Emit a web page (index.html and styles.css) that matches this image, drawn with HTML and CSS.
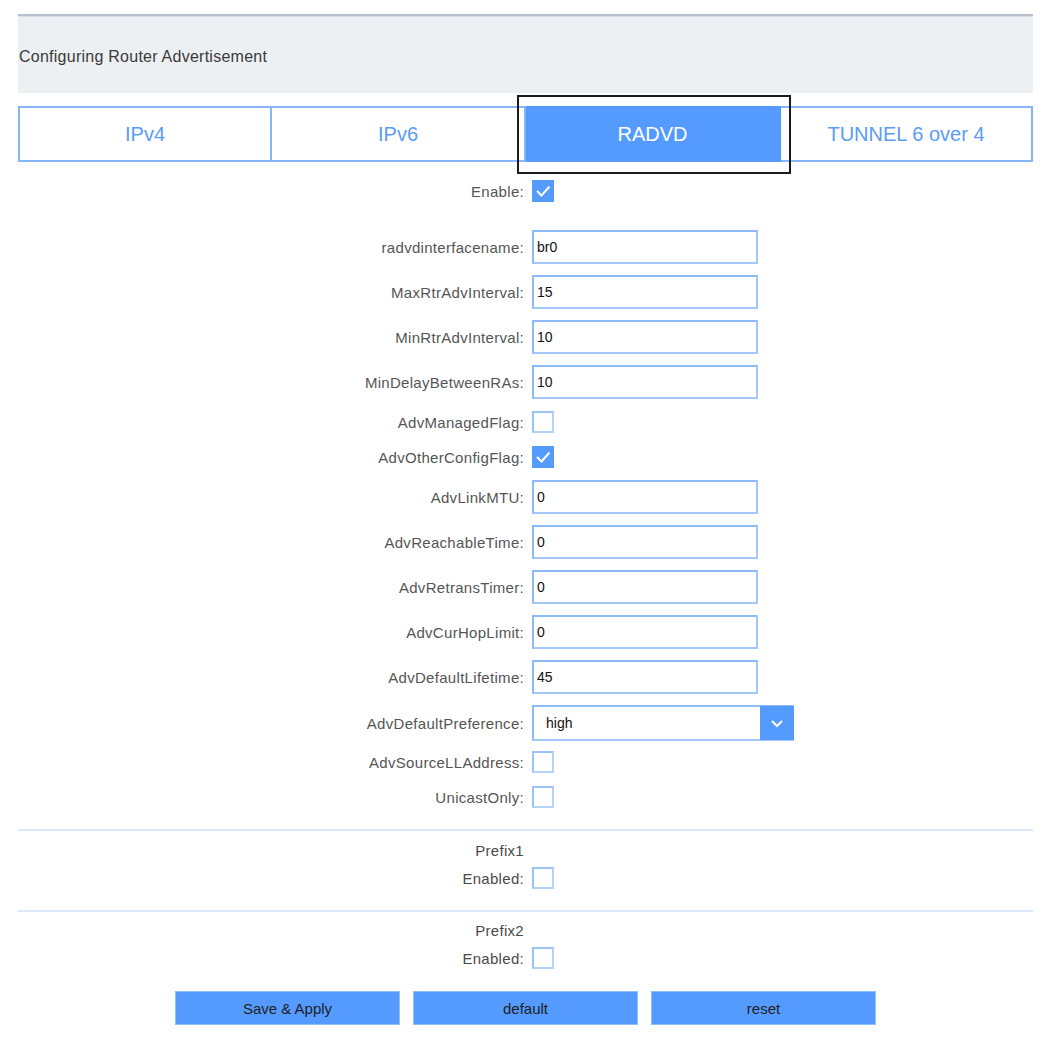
FILE: index.html
```html
<!DOCTYPE html>
<html lang="en">
<head>
<meta charset="utf-8">
<title>Configuring Router Advertisement</title>
<link rel="stylesheet" href="styles.css">
</head>
<body>
<div class="page">
  <div class="topbar"></div>
  <div class="header">Configuring Router Advertisement</div>

  <div class="tabs">
    <div class="tab">IPv4</div>
    <div class="tab">IPv6</div>
    <div class="tab active">RADVD</div>
    <div class="tab">TUNNEL 6 over 4</div>
  </div>

  <form class="form">
    <div class="row chk first"><label>Enable:</label><span class="cb on"><svg viewBox="0 0 22 22" width="22" height="22"><polyline points="5,11 9.5,15.5 17.5,6.5" fill="none" stroke="#fff" stroke-width="2"/></svg></span></div>
    <div class="row"><label>radvdinterfacename:</label><input class="txt" type="text" value="br0"></div>
    <div class="row"><label>MaxRtrAdvInterval:</label><input class="txt" type="text" value="15"></div>
    <div class="row"><label>MinRtrAdvInterval:</label><input class="txt" type="text" value="10"></div>
    <div class="row"><label>MinDelayBetweenRAs:</label><input class="txt" type="text" value="10"></div>
    <div class="row chk"><label>AdvManagedFlag:</label><span class="cb"></span></div>
    <div class="row chk"><label>AdvOtherConfigFlag:</label><span class="cb on"><svg viewBox="0 0 22 22" width="22" height="22"><polyline points="5,11 9.5,15.5 17.5,6.5" fill="none" stroke="#fff" stroke-width="2"/></svg></span></div>
    <div class="row"><label>AdvLinkMTU:</label><input class="txt" type="text" value="0"></div>
    <div class="row"><label>AdvReachableTime:</label><input class="txt" type="text" value="0"></div>
    <div class="row"><label>AdvRetransTimer:</label><input class="txt" type="text" value="0"></div>
    <div class="row"><label>AdvCurHopLimit:</label><input class="txt" type="text" value="0"></div>
    <div class="row"><label>AdvDefaultLifetime:</label><input class="txt" type="text" value="45"></div>
    <div class="row"><label>AdvDefaultPreference:</label>
      <div class="select"><span class="sel-val">high</span><span class="sel-btn"><svg viewBox="0 0 34 34" width="34" height="34"><polyline points="12,15 17,20 22,15" fill="none" stroke="#fff" stroke-width="2"/></svg></span></div>
    </div>
    <div class="row chk"><label>AdvSourceLLAddress:</label><span class="cb"></span></div>
    <div class="row chk"><label>UnicastOnly:</label><span class="cb"></span></div>
  </form>

  <div class="divider"></div>
  <div class="prefix">
    <div class="row plain"><label>Prefix1</label><span></span></div>
    <div class="row chk"><label>Enabled:</label><span class="cb"></span></div>
  </div>
  <div class="divider"></div>
  <div class="prefix second">
    <div class="row plain"><label>Prefix2</label><span></span></div>
    <div class="row chk"><label>Enabled:</label><span class="cb"></span></div>
  </div>

  <div class="buttons">
    <button type="button" class="btn">Save &amp; Apply</button>
    <button type="button" class="btn">default</button>
    <button type="button" class="btn">reset</button>
  </div>
</div>
</body>
</html>
```
FILE: styles.css
```css
* { box-sizing: border-box; }
html, body { margin: 0; padding: 0; background: #fff; }
body {
  font-family: "Liberation Sans", Arial, sans-serif;
  color: #555;
}
.page {
  margin-left: 18px;
  width: 1015px;
}
.topbar {
  height: 16px;
  border-bottom: 2px solid #b7c0cc;
}
.header {
  height: 77px;
  border-top: 1px solid #dadfe6;
  background: #edf0f3;
  display: flex;
  align-items: center;
  padding: 4px 0 0 1px;
  font-size: 16px;
  letter-spacing: 0.25px;
  color: #3a3a3a;
}
.tabs {
  margin-top: 13px;
  display: grid;
  grid-template-columns: 252px 254px 255px 1fr;
  height: 56px;
  border: 2px solid #86b5fa;
}
.tab {
  display: flex;
  align-items: center;
  justify-content: center;
  font-size: 20px;
  color: #5a9cf8;
  border-right: 2px solid #86b5fa;
}
.tab:last-child { border-right: none; }
.tab.active {
  position: relative;
  background: #559bff;
  border-right-color: #559bff;
  color: #fff;
  margin: -2px 0;
}
.tab.active::after {
  content: "";
  position: absolute;
  left: -9px;
  right: -12px;
  top: -11px;
  bottom: -12px;
  border: 2px solid #1b1b1b;
  pointer-events: none;
}
.form {
  margin-top: 17px;
  display: flex;
  flex-direction: column;
  gap: 11px;
}
.row {
  display: grid;
  grid-template-columns: 506px auto;
  column-gap: 8px;
  align-items: center;
  height: 34px;
}
.row.chk { height: 24px; }
.row.first { margin-bottom: 16px; }
.row.plain { height: 18px; }
.row label {
  text-align: right;
  font-size: 15px;
  letter-spacing: 0.3px;
  color: #555;
  white-space: nowrap;
}
.txt {
  width: 226px;
  height: 34px;
  border: 2px solid #a3c7f9;
  border-top-color: #8dbaf8;
  border-left-color: #8dbaf8;
  padding: 0 3px;
  font-family: "Liberation Sans", Arial, sans-serif;
  font-size: 14px;
  color: #111;
  background: #fff;
  outline: none;
}
.cb {
  display: block;
  width: 22px;
  height: 22px;
  border: 2px solid #b5d2fb;
  border-top-color: #9cc2f8;
  border-left-color: #9cc2f8;
  background: #fff;
}
.cb.on {
  background: #559bff;
  border: none;
}
.cb svg { display: block; }
.select {
  width: 262px;
  height: 36px;
  border: 2px solid #a3c7f9;
  border-top-color: #8dbaf8;
  border-left-color: #8dbaf8;
  display: flex;
  align-items: center;
  justify-content: space-between;
  background: #fff;
}
.sel-val {
  padding-left: 12px;
  font-size: 14px;
  color: #111;
}
.sel-btn {
  width: 34px;
  height: 34px;
  margin-right: -2px;
  background: #559bff;
  display: flex;
  align-items: center;
  justify-content: center;
}
.sel-btn svg { display: block; }
.divider {
  margin-top: 20px;
  height: 2px;
  background: #dce8fa;
}
.prefix {
  padding-top: 10px;
  display: flex;
  flex-direction: column;
  gap: 7px;
}
.prefix .row label { color: #4a4a4a; }
.prefix.second { padding-top: 9px; }
.buttons {
  margin-top: 21px;
  display: flex;
  justify-content: center;
  gap: 13px;
}
.btn {
  width: 225px;
  height: 34px;
  background: #559bff;
  border: 1px solid #8fbeff;
  font-family: "Liberation Sans", Arial, sans-serif;
  font-size: 15px;
  color: #1e1e1e;
  padding: 0;
}
```
